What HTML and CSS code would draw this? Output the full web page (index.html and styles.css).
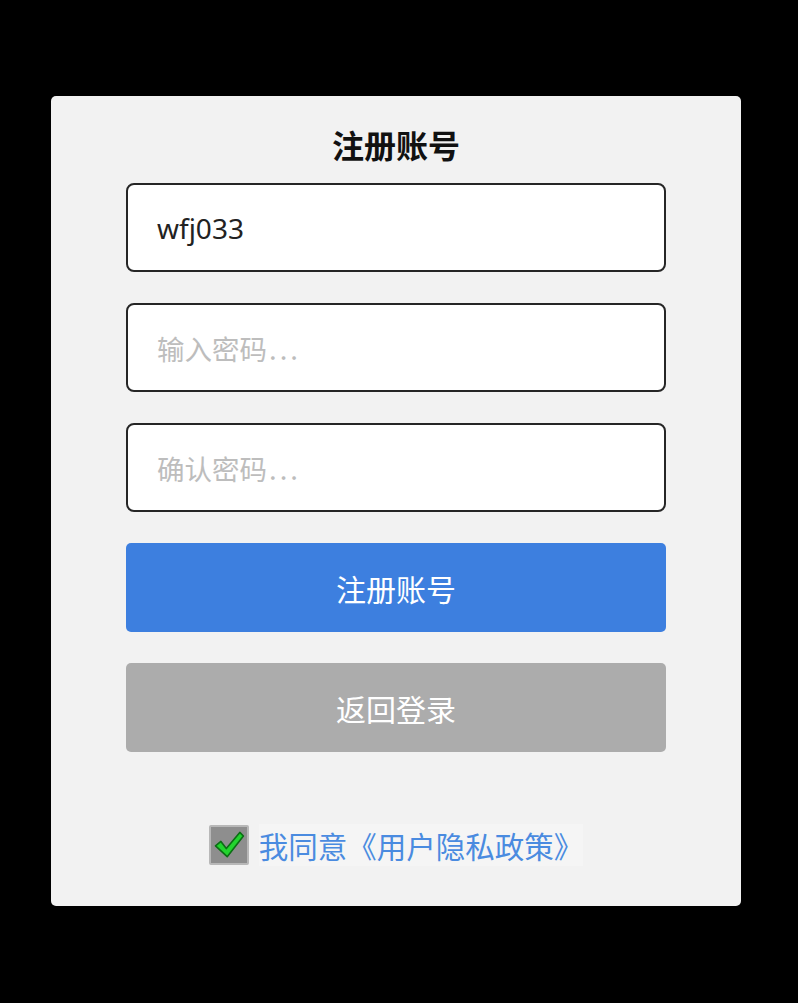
FILE: index.html
```html
<!DOCTYPE html>
<html lang="zh">
<head>
<meta charset="utf-8">
<title>注册账号</title>
<link rel="stylesheet" href="styles.css">
</head>
<body>
<div class="card">
  <h1 class="title">注册账号</h1>
  <div class="field"><span class="value">wfj033</span></div>
  <div class="field"><span class="placeholder">输入密码<span class="dots">...</span></span></div>
  <div class="field"><span class="placeholder">确认密码<span class="dots">...</span></span></div>
  <div class="btn btn-primary">注册账号</div>
  <div class="btn btn-gray">返回登录</div>
  <div class="agree">
    <span class="check">
      <svg viewBox="0 0 40 40" width="40" height="40">
        <path d="M5 21 L11 16 L17 24 L32 6 L36 10 L18 33 Z" fill="#22d42e" stroke="#0b6e14" stroke-width="1.8" stroke-linejoin="round"/>
      </svg>
    </span>
    <span class="agree-text">我同意《用户隐私政策》</span>
  </div>
</div>
</body>
</html>
```
FILE: styles.css
```css
html, body {
  margin: 0;
  padding: 0;
  background: #000;
}
body {
  width: 798px;
  height: 1003px;
  font-family: "Noto Sans", "Noto Sans CJK SC", sans-serif;
}
.card {
  margin: 96px 0 0 51px;
  width: 690px;
  height: 810px;
  box-sizing: border-box;
  background: #f2f2f2;
  border-radius: 5px;
  padding-top: 27px;
  display: flex;
  flex-direction: column;
  align-items: center;
}
.title {
  margin: 0 0 18px;
  font-size: 32px;
  line-height: 42px;
  font-weight: 700;
  color: #111;
  font-family: "Noto Sans CJK SC", sans-serif;
}
.field {
  width: 540px;
  height: 89px;
  box-sizing: border-box;
  border: 2px solid #262626;
  border-radius: 8px;
  background: #fff;
  margin-bottom: 31px;
  padding-left: 29px;
  display: flex;
  align-items: center;
  font-size: 28px;
}
.value {
  color: #222;
  font-family: "Noto Sans", sans-serif;
}
.placeholder {
  color: #bdbdbd;
  font-size: 27.5px;
  font-family: "Noto Sans CJK SC", sans-serif;
}
.dots {
  letter-spacing: 3px;
  margin-left: 2px;
}
.btn {
  width: 540px;
  height: 89px;
  border-radius: 5px;
  display: flex;
  align-items: center;
  justify-content: center;
  color: #fff;
  font-size: 30px;
  font-family: "Noto Sans CJK SC", sans-serif;
  margin-bottom: 31px;
}
.btn-primary {
  background: #3d7fdf;
}
.btn-gray {
  background: #acacac;
  margin-bottom: 72px;
}
.agree {
  display: flex;
  align-items: center;
  height: 42px;
}
.check {
  width: 40px;
  height: 40px;
  box-sizing: border-box;
  background: #8e8e8e;
  border: 2px solid #b8b8b8;
  border-radius: 2px;
  display: flex;
  align-items: center;
  justify-content: center;
  margin-right: 10px;
}
.check svg {
  width: 36px;
  height: 36px;
}
.agree-text {
  color: #4a8be0;
  font-size: 29.5px;
  line-height: 42px;
  font-family: "Noto Sans CJK SC", sans-serif;
  background: #f5f5f5;
}
```
